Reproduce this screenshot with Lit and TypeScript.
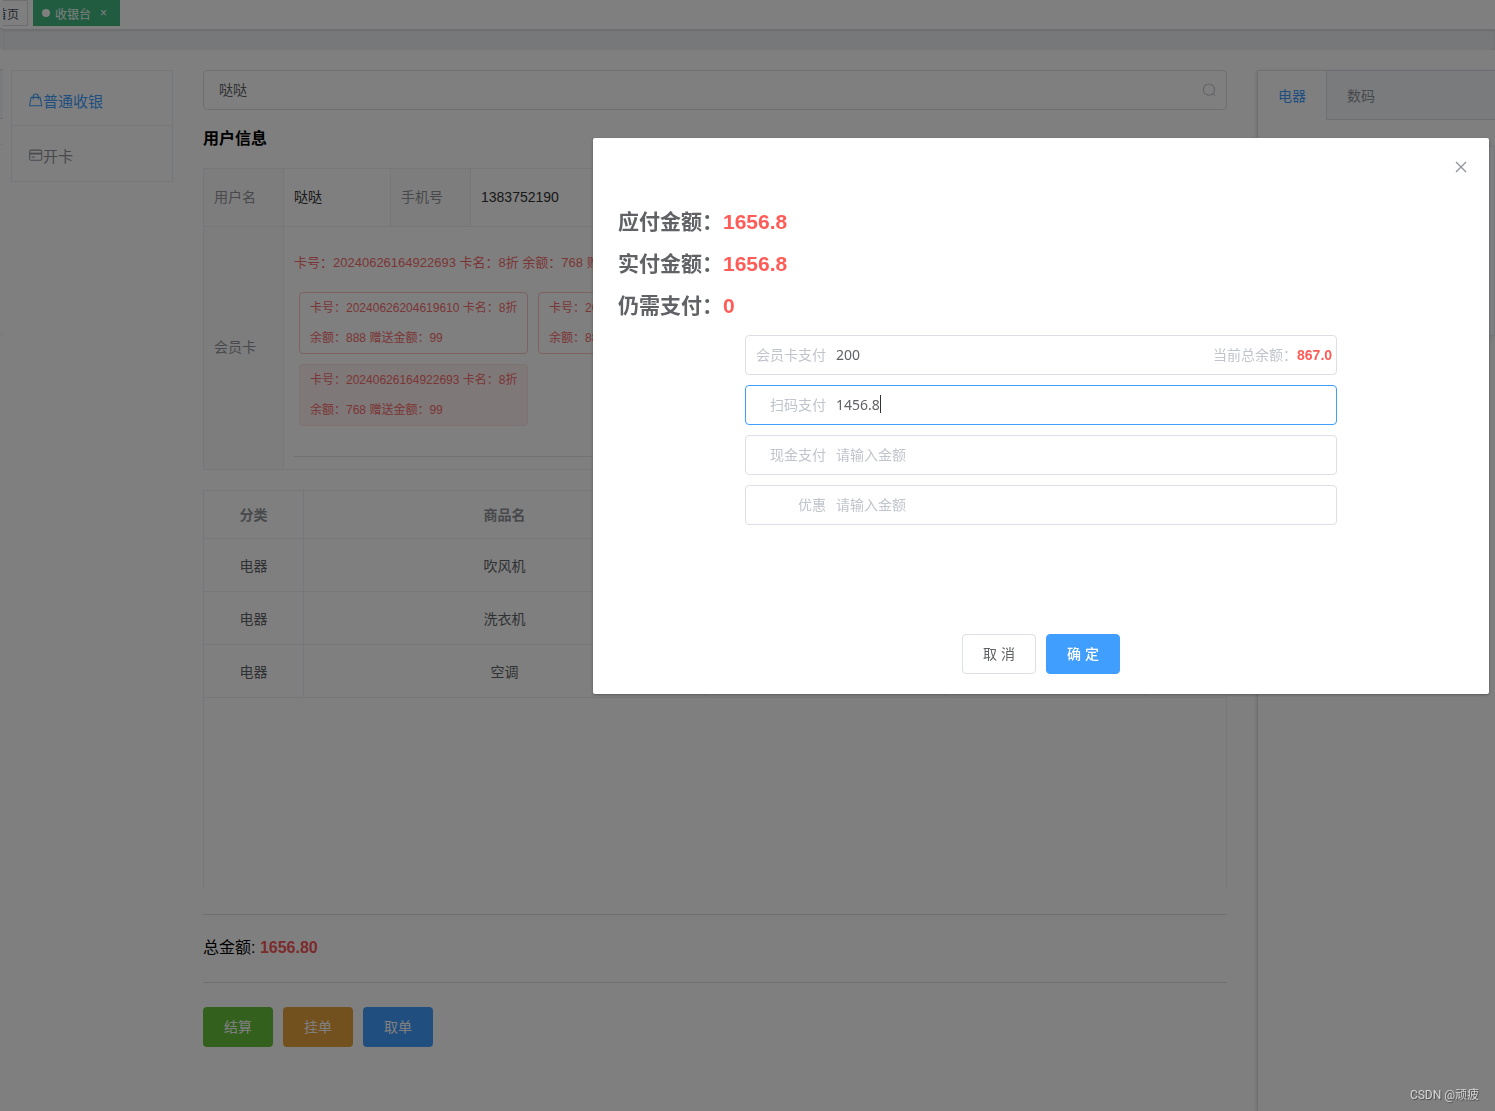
import { LitElement, html, css, svg, nothing } from "lit";
import { customElement, property } from "lit/decorators.js";
import { classMap } from "lit/directives/class-map.js";

interface Card {
  no: string;
  name: string;
  balance: number;
  gift: number;
  active?: boolean;
}

interface PayField {
  id: string;
  label: string;
  value: string;
  focused?: boolean;
  balance?: string;
}

const cards: Card[] = [
  { no: "20240626204619610", name: "8折", balance: 888, gift: 99 },
  { no: "20240626204619610", name: "8折", balance: 888, gift: 99 },
  { no: "20240626164922693", name: "8折", balance: 768, gift: 99, active: true },
];

const goods = ["吹风机", "洗衣机", "空调"];

const amounts = [
  ["应付金额", "1656.8"],
  ["实付金额", "1656.8"],
  ["仍需支付", "0"],
];

const fields: PayField[] = [
  { id: "card", label: "会员卡支付", value: "200", balance: "867.0" },
  { id: "scan", label: "扫码支付", value: "1456.8", focused: true },
  { id: "cash", label: "现金支付", value: "" },
  { id: "off", label: "优惠", value: "" },
];

const icon = (size: number, body: unknown) => html`<svg
  width=${size}
  height=${size}
  viewBox="0 0 16 16"
  fill="none"
  stroke="currentColor"
  aria-hidden="true"
>${body}</svg>`;

const bagIcon = icon(14, svg`<path stroke-width="1.2" d="M2.4 5h10.2l2 9.6H.6z M4.8 7.4V4a2.9 2.9 0 0 1 5.8 0v3.4"/>`);
const cardIcon = icon(14, svg`<rect stroke-width="1.2" x=".8" y="2.4" width="13.8" height="11.6" rx="1.6"/><path stroke-width="2" d="M1 6.4h13.4"/><path stroke-width="1.2" d="M3 10.4h3.6"/>`);
const searchIcon = icon(14, svg`<circle stroke-width="1.2" cx="8" cy="7.6" r="6.4"/><path stroke-width="1.2" d="M12.4 12l2.4 2.4"/>`);
const closeIcon = icon(16, svg`<path stroke-width="1.3" d="M3 3l10 10M13 3L3 13"/>`);

const shared = css`
  * {
    box-sizing: border-box;
  }
  svg {
    display: block;
    flex: none;
  }
  input,
  button {
    font: inherit;
  }
  input {
    border: 0;
    padding: 0;
    background: none;
    outline: none;
    min-width: 0;
    color: #606266;
  }
  button {
    cursor: pointer;
  }
`;

@customElement("tags-bar")
class TagsBar extends LitElement {
  static styles = [
    shared,
    css`
      :host {
        display: block;
        overflow: hidden;
        background: #fff;
        border-bottom: 1px solid #d8dce5;
      }
      .tags {
        display: flex;
        gap: 5px;
        height: 29px;
      }
      .tag {
        display: flex;
        align-items: center;
        height: 26px;
        padding: 0 8px;
        border: 1px solid #d8dce5;
        font-size: 12px;
        color: #495060;
        text-decoration: none;
        white-space: nowrap;
      }
      .home {
        justify-content: flex-end;
        width: 25px;
        border-left: 0;
      }
      .active {
        gap: 5px;
        background: #42b983;
        border-color: #42b983;
        color: #fff;
        padding-right: 12px;
      }
      .dot {
        width: 8px;
        height: 8px;
        border-radius: 50%;
        background: #fff;
      }
      .close {
        border: 0;
        padding: 0;
        margin-left: 4px;
        background: none;
        color: inherit;
      }
    `,
  ];
  render() {
    return html`<nav class="tags">
      <a class="tag home" href="#home">首页</a>
      <a class="tag active" href="#cashier">
        <span class="dot"></span><span>收银台</span>
        <button class="close" aria-label="关闭">×</button>
      </a>
    </nav>`;
  }
}

@customElement("user-info")
class UserInfo extends LitElement {
  static styles = [
    shared,
    css`
      :host {
        display: block;
      }
      table {
        width: 100%;
        border-collapse: collapse;
        table-layout: fixed;
        font-size: 14px;
      }
      .w-label {
        width: 80px;
      }
      .w-name {
        width: 107px;
      }
      th,
      td {
        height: 58px;
        padding: 0 10px 2px;
        border: 1px solid #ebeef5;
        text-align: left;
        font-weight: 400;
        line-height: 20px;
      }
      th {
        background: #fafafa;
        color: #909399;
      }
      td {
        color: #303133;
      }
      .member {
        padding: 21px 10px 12px;
        color: #f56c6c;
      }
      .current {
        height: 30px;
        line-height: 30px;
        font-size: 13px;
        overflow: hidden;
        white-space: nowrap;
      }
      .cards {
        display: grid;
        grid-template-columns: 229px 229px;
        gap: 10px;
        padding: 14px 5px 30px;
        border-bottom: 1px solid #e4e7ed;
      }
      .card {
        padding: 0 10px;
        border: 1px solid #fbc4c4;
        border-radius: 4px;
        background: #fff;
        color: #f56c6c;
        font-size: 12px;
        line-height: 30px;
        text-align: left;
        white-space: nowrap;
      }
      .on {
        background: #fef0f0;
        border-color: #fde2e2;
      }
    `,
  ];
  render() {
    return html`<table>
      <colgroup>
        <col class="w-label" /><col class="w-name" /><col class="w-label" /><col />
      </colgroup>
      <tbody>
        <tr>
          <th scope="row">用户名</th>
          <td>哒哒</td>
          <th scope="row">手机号</th>
          <td>1383752190</td>
        </tr>
        <tr>
          <th scope="row">会员卡</th>
          <td class="member" colspan="3">
            <div class="current">
              卡号：20240626164922693 卡名：8折 余额：768 赠送金额：99
            </div>
            <div class="cards">
              ${cards.map(
                (c) => html`<button class=${classMap({ card: true, on: !!c.active })}>
                  卡号：${c.no} 卡名：${c.name}<br />余额：${c.balance} 赠送金额：${c.gift}
                </button>`
              )}
            </div>
          </td>
        </tr>
      </tbody>
    </table>`;
  }
}

@customElement("goods-table")
class GoodsTable extends LitElement {
  static styles = [
    shared,
    css`
      :host {
        display: block;
        min-height: 398px;
        border: 1px solid #ebeef5;
        border-bottom: 0;
      }
      table {
        width: 100%;
        border-collapse: separate;
        border-spacing: 0;
        table-layout: fixed;
        font-size: 14px;
      }
      .w-kind {
        width: 100px;
      }
      .w-price {
        width: 240px;
      }
      .w-count {
        width: 200px;
      }
      .w-action {
        width: 80px;
      }
      th,
      td {
        height: 53px;
        padding: 0 0 1px;
        border-right: 1px solid #ebeef5;
        border-bottom: 1px solid #ebeef5;
        text-align: center;
        color: #606266;
      }
      thead th,
      thead td {
        height: 48px;
        color: #909399;
      }
      tr > :last-child {
        border-right: 0;
      }
    `,
  ];
  render() {
    return html`<table>
      <colgroup>
        <col class="w-kind" /><col /><col class="w-price" /><col class="w-count" /><col class="w-action" />
      </colgroup>
      <thead>
        <tr>
          <th scope="col">分类</th>
          <th scope="col">商品名</th>
          <td></td>
          <td></td>
          <td></td>
        </tr>
      </thead>
      <tbody>
        ${goods.map(
          (name) => html`<tr>
            <td>电器</td>
            <td>${name}</td>
            <td></td>
            <td></td>
            <td></td>
          </tr>`
        )}
      </tbody>
    </table>`;
  }
}

@customElement("pay-field")
class PayFieldElement extends LitElement {
  @property({ attribute: false }) field!: PayField;
  static styles = [
    shared,
    css`
      :host {
        display: block;
      }
      .box {
        display: flex;
        align-items: center;
        height: 40px;
        padding: 0 4px 2px 10px;
        border: 1px solid #dcdfe6;
        border-radius: 4px;
        color: #c0c4cc;
        font-size: 14px;
      }
      .focused {
        border-color: #409eff;
      }
      .label {
        width: 70px;
        margin-right: 10px;
        text-align: right;
        white-space: nowrap;
      }
      .input {
        flex: 1;
        height: 36px;
        font-family: "Noto Sans", "Noto Sans CJK SC", sans-serif;
        caret-color: transparent;
      }
      .focused .input {
        flex: none;
        field-sizing: content;
      }
      .input::placeholder {
        color: #c0c4cc;
        opacity: 1;
      }
      .caret {
        width: 1px;
        height: 18px;
        background: #303133;
      }
      .sum {
        color: #ff5b57;
      }
    `,
  ];
  render() {
    const f = this.field;
    return html`<div class=${classMap({ box: true, focused: !!f.focused })}>
      <label class="label" for=${f.id}>${f.label}</label>
      <input class="input" id=${f.id} type="text" placeholder="请输入金额" .value=${f.value} />
      ${f.focused ? html`<span class="caret"></span>` : nothing}
      ${f.balance ? html`<span>当前总余额：<b class="sum">${f.balance}</b></span>` : nothing}
    </div>`;
  }
}

@customElement("pay-dialog")
class PayDialog extends LitElement {
  static styles = [
    shared,
    css`
      :host {
        display: block;
        padding: 20px 25px;
        background: #fff;
        border-radius: 2px;
        box-shadow: 0 1px 3px rgba(0, 0, 0, 0.3);
        color: #606266;
      }
      .head {
        display: flex;
        justify-content: flex-end;
        height: 43px;
      }
      .close {
        display: flex;
        width: 16px;
        height: 18px;
        margin-right: -5px;
        padding: 1px 0;
        border: 0;
        background: none;
        color: #909399;
      }
      .amount {
        margin: 0;
        font-size: 21px;
        font-weight: 700;
        line-height: 42px;
      }
      .sum {
        color: #ff5b57;
      }
      .form {
        display: grid;
        gap: 10px;
        width: 70%;
        margin: 8px auto 0;
      }
      .foot {
        display: flex;
        justify-content: center;
        gap: 10px;
        margin-top: 109px;
      }
      .btn {
        height: 40px;
        padding: 0 20px 2px;
        border: 1px solid #dcdfe6;
        border-radius: 4px;
        background: #fff;
        color: #606266;
        font-size: 14px;
      }
      .primary {
        background: #409eff;
        border-color: #409eff;
        color: #fff;
        font-weight: 500;
      }
    `,
  ];
  render() {
    return html`
      <header class="head">
        <button class="close" aria-label="关闭">${closeIcon}</button>
      </header>
      ${amounts.map(
        ([label, value]) => html`<p class="amount">${label}：<span class="sum">${value}</span></p>`
      )}
      <div class="form">
        ${fields.map((f) => html`<pay-field .field=${f}></pay-field>`)}
      </div>
      <footer class="foot">
        <button class="btn">取 消</button>
        <button class="btn primary">确 定</button>
      </footer>
    `;
  }
}

@customElement("app-root")
class AppRoot extends LitElement {
  static styles = [
    shared,
    css`
      :host {
        display: flex;
        min-height: 100vh;
        overflow: hidden;
        background: #fff;
        font-family: "Liberation Sans", "Noto Sans CJK SC", sans-serif;
        font-size: 14px;
      }
      .edge {
        flex: none;
        width: 3px;
        padding-top: 69px;
        background: linear-gradient(#fff 28px, #d8dce5 28px, #eff1f4 31px, #eff1f4 49px, #fff 49px);
      }
      .edge-tabs {
        height: 50px;
        background: #f5f7fa;
        border: solid #dcdfe6;
        border-width: 1px 0;
      }
      .edge-card {
        height: 191px;
        margin-top: 25px;
        border: solid #f2f2f2;
        border-width: 1px 0;
      }
      .page {
        flex: 1;
        min-width: 0;
        display: flex;
        flex-direction: column;
      }
      .strip {
        height: 20px;
        background: #eff1f4;
        box-shadow: inset 0 1px 3px rgba(0, 0, 0, 0.1);
      }
      .content {
        flex: 1;
        display: grid;
        grid-template-columns: 162px minmax(0, 1fr) 238px;
        gap: 30px;
        padding: 20px 0 0 8px;
      }
      .menu {
        align-self: start;
        padding-bottom: 1px;
        border: 1px solid #ebeef5;
      }
      .item {
        display: flex;
        align-items: center;
        height: 54px;
        padding: 4px 17px 0;
        font-size: 15px;
        color: #909399;
        text-decoration: none;
      }
      .item + .item {
        height: 55px;
        border-top: 1px solid #ebeef5;
      }
      .current {
        color: #409eff;
      }
      .search {
        display: flex;
        align-items: center;
        height: 40px;
        padding: 0 10px 0 15px;
        border: 1px solid #dcdfe6;
        border-radius: 4px;
        color: #c0c4cc;
      }
      .query {
        flex: 1;
        height: 38px;
        padding-bottom: 2px;
      }
      .title {
        margin: 17px 0;
        font-size: 16px;
        line-height: 24px;
        color: #000;
      }
      .goods {
        margin-top: 20px;
      }
      .total {
        margin: 26px 0 24px;
        padding-bottom: 2px;
        border: solid #dcdfe6;
        border-width: 1px 0;
        line-height: 65px;
        font-size: 16px;
        color: #000;
      }
      .sum {
        color: #f9575a;
      }
      .actions {
        display: flex;
        gap: 10px;
      }
      .btn {
        width: 70px;
        height: 40px;
        padding: 0 0 2px;
        border: 0;
        border-radius: 4px;
        color: #fff;
      }
      .success {
        background: #67c23a;
      }
      .warning {
        background: #e6a23c;
      }
      .primary {
        background: #409eff;
      }
      .side {
        border: 1px solid #dcdfe6;
        border-width: 1px 0 0 1px;
        box-shadow: 0 2px 4px rgba(0, 0, 0, 0.12), 0 0 6px rgba(0, 0, 0, 0.04);
      }
      .tabs {
        display: flex;
        height: 49px;
        background: #f5f7fa;
      }
      .tab {
        padding: 0 20px;
        border: 0;
        border-bottom: 1px solid #dcdfe6;
        background: none;
        color: #909399;
      }
      .tab.on {
        padding-bottom: 1px;
        border-bottom: 0;
        border-right: 1px solid #dcdfe6;
        background: #fff;
        color: #409eff;
      }
      .rest {
        flex: 1;
        border-bottom: 1px solid #dcdfe6;
      }
      .product {
        height: 190px;
        margin-top: 26px;
        border: 1px solid #ebeef5;
        box-shadow: 0 2px 12px rgba(0, 0, 0, 0.1);
      }
      .mask {
        position: fixed;
        inset: 0;
        display: flex;
        justify-content: flex-end;
        align-items: flex-start;
        padding: 138px 6px 0;
        background: rgba(0, 0, 0, 0.5);
      }
      .dialog {
        width: 100%;
        max-width: 896px;
      }
      .mark {
        position: fixed;
        right: 16px;
        bottom: 8px;
        font: 12px/16px Roboto, "Noto Sans CJK SC", sans-serif;
        color: #d6d6d6;
        text-shadow: 1px 1px 1px #4a4a4a;
      }
    `,
  ];
  render() {
    return html`
      <aside class="edge">
        <div class="edge-tabs"></div>
        <div class="edge-card"></div>
      </aside>
      <div class="page">
        <tags-bar></tags-bar>
        <div class="strip"></div>
        <main class="content">
          <nav class="menu">
            <a class="item current" href="#cash">${bagIcon}普通收银</a>
            <a class="item" href="#open">${cardIcon}开卡</a>
          </nav>
          <section>
            <div class="search">
              <input class="query" type="text" aria-label="用户" .value=${"哒哒"} />
              ${searchIcon}
            </div>
            <h2 class="title">用户信息</h2>
            <user-info></user-info>
            <goods-table class="goods"></goods-table>
            <div class="total">总金额: <b class="sum">1656.80</b></div>
            <div class="actions">
              <button class="btn success">结算</button>
              <button class="btn warning">挂单</button>
              <button class="btn primary">取单</button>
            </div>
          </section>
          <aside class="side">
            <div class="tabs">
              <button class="tab on">电器</button>
              <button class="tab">数码</button>
              <span class="rest"></span>
            </div>
            <div class="product"></div>
          </aside>
        </main>
      </div>
      <div class="mask">
        <pay-dialog class="dialog" role="dialog" aria-label="支付"></pay-dialog>
      </div>
      <span class="mark">CSDN @顽疲</span>
    `;
  }
}
